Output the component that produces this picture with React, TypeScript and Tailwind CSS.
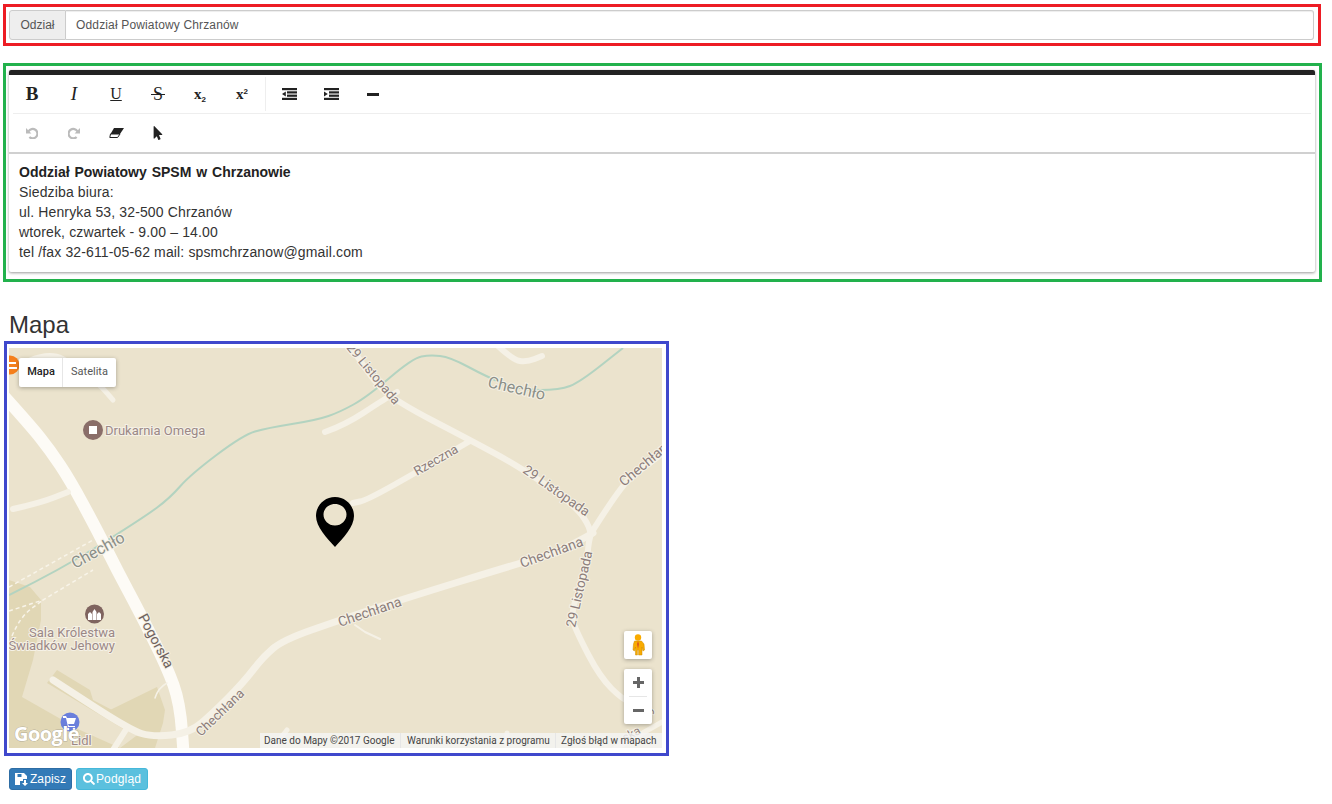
import { FaMousePointer, FaSearch } from "react-icons/fa";

type Pt = [number, number];

// rounds a list of points into a road-like path
const smooth = (pts: Pt[]) => {
  let d = `M${pts[0][0]} ${pts[0][1]}`;
  for (let i = 1; i < pts.length - 1; i++) {
    const mx = (pts[i][0] + pts[i + 1][0]) / 2;
    const my = (pts[i][1] + pts[i + 1][1]) / 2;
    d += ` Q${pts[i][0]} ${pts[i][1]} ${mx} ${my}`;
  }
  const last = pts[pts.length - 1];
  return `${d} L${last[0]} ${last[1]}`;
};

const roads: { pts: Pt[]; w: number; main?: boolean }[] = [
  { pts: [[2, 394], [30, 425], [50, 450], [70, 480], [97, 530], [117, 570], [140, 613], [167, 667], [180, 703], [184, 760]], w: 12, main: true },
  { pts: [[30, 360], [50, 352], [75, 365], [100, 385], [113, 400]], w: 5 },
  { pts: [[13, 509], [40, 503], [68, 492]], w: 6 },
  { pts: [[325, 432], [345, 425], [383, 400], [397, 392]], w: 6 },
  { pts: [[350, 345], [372, 380], [397, 402], [470, 440], [520, 467], [575, 505], [592, 530], [588, 545], [587, 570], [570, 613], [577, 633], [600, 677], [623, 700], [640, 706]], w: 6 },
  { pts: [[590, 535], [620, 487], [640, 470], [670, 448]], w: 6 },
  { pts: [[593, 533], [560, 552], [520, 563], [400, 600], [340, 620], [283, 640], [263, 657], [243, 683], [213, 713], [190, 733], [153, 737], [130, 730], [53, 680]], w: 7 },
  { pts: [[470, 441], [417, 472], [367, 500], [353, 503]], w: 6 },
  { pts: [[127, 728], [113, 750]], w: 6 },
  { pts: [[497, 345], [513, 360], [527, 362], [542, 356]], w: 6 },
  { pts: [[662, 722], [613, 750]], w: 5 },
  { pts: [[287, 730], [275, 745]], w: 5 },
  { pts: [[507, 733], [507, 748]], w: 5 },
];

const labels: { text: string; x: number; y: number; r: number; size: number; cls: string }[] = [
  { text: "Chechło", x: 75, y: 569, r: -29, size: 16, cls: "fill-[#8b8f88]" },
  { text: "Chechło", x: 487, y: 387, r: 13, size: 16, cls: "fill-[#8b8f88]" },
  { text: "Rzeczna", x: 417, y: 476, r: -30, size: 13, cls: "fill-[#8c7d7a]" },
  { text: "29 Listopada", x: 522, y: 472, r: 35, size: 13.5, cls: "fill-[#8c7d7a]" },
  { text: "29 Listopada", x: 346, y: 348, r: 50, size: 13, cls: "fill-[#8c7d7a]" },
  { text: "Chechłana", x: 522, y: 568, r: -20, size: 14, cls: "fill-[#8c7d7a]" },
  { text: "Chechłana", x: 340, y: 627, r: -19, size: 14, cls: "fill-[#8c7d7a]" },
  { text: "Chechłana", x: 201, y: 737, r: -44, size: 13, cls: "fill-[#8c7d7a]" },
  { text: "Chechłana", x: 624, y: 487, r: -40, size: 14, cls: "fill-[#8c7d7a]" },
  { text: "29 Listopada", x: 575, y: 628, r: -77, size: 13.5, cls: "fill-[#8c7d7a]" },
  { text: "Pogorska", x: 138, y: 617, r: 62, size: 14, cls: "fill-[#6e625e]" },
  { text: "ska", x: 625, y: 742, r: -28, size: 12, cls: "fill-[#8c7d7a]" },
  { text: "9", x: 653, y: 716, r: -70, size: 12, cls: "fill-[#8c7d7a]" },
];

const MapDrawing = () => (
  <svg viewBox="9 348 653 400" className="absolute inset-0 block h-full w-full font-['Roboto',sans-serif]">
    <rect x="9" y="348" width="653" height="400" fill="#ebe3cd" />
    <path d="M9 580 L30 587 L41 600 L41 620 L33 660 L22 697 L80 730 L120 748 L9 748Z" fill="#e1d7b5" />
    <path d="M57 670 L47 683 L125 730 L135 722 L93 700 L90 690Z" fill="#e1d7b5" />
    <path d="M110 710 L157 687 L165 710 L163 723 L155 748 L120 748 L140 733Z" fill="#e1d7b5" />
    <path d={smooth([[9, 595], [60, 570], [143, 518], [170, 498], [190, 475], [243, 435], [267, 428], [317, 420], [340, 412], [367, 397], [413, 358], [430, 355], [450, 357], [487, 377], [520, 390], [560, 390], [580, 382], [623, 348]])} fill="none" stroke="#b3d3c0" strokeWidth="2" />
    <g fill="none" stroke="#f8f4e9" strokeWidth="1.5" strokeDasharray="4 3">
      <path d="M9 587 L93 540" />
      <path d="M9 611 L43 600 L93 570" />
      <path d={smooth([[12, 636], [20, 617], [43, 600]])} />
    </g>
    <g fill="none" strokeLinecap="round" strokeLinejoin="round">
      {roads.map((road, i) => (
        <path key={i} d={smooth(road.pts)} stroke={road.main ? "#fdfbf6" : "#f5f1e6"} strokeWidth={road.w} />
      ))}
      <path d="M355 625 L365 632 L380 639" stroke="#f5f1e6" strokeWidth="2" />
      <path d="M155 698 Q158 688 167 683" stroke="#f5f1e6" strokeWidth="1.5" />
    </g>
    {labels.map((l, i) => (
      <text
        key={i}
        transform={`translate(${l.x} ${l.y}) rotate(${l.r})`}
        fontSize={l.size}
        stroke="#f5f1e6"
        strokeWidth="2"
        className={`${l.cls} [paint-order:stroke]`}
      >
        {l.text}
      </text>
    ))}

    <circle cx="10" cy="365" r="9.5" fill="#f57f1c" />
    <path d="M9 362h7v2H9zM9 367h8v2H9z" fill="#fff" />

    <circle cx="93" cy="430" r="10" fill="#8a6e69" />
    <rect x="89" y="426" width="8" height="8" fill="#fff" />
    <text x="105" y="435" fontSize="13" stroke="#f5f1e6" strokeWidth="2" className="fill-[#9b8886] [paint-order:stroke]">
      Drukarnia Omega
    </text>

    <circle cx="94.5" cy="614" r="9.5" fill="#7f645f" />
    <path d="M88 620v-6l2-2 2 2v6zM92.5 620v-8l2-3 2 3v8zM97 620v-6l2-2 2 2v6z" fill="#fff" />
    <g stroke="#f5f1e6" strokeWidth="2" fontSize="13" textAnchor="end" className="fill-[#9b8886] [paint-order:stroke]">
      <text x="115" y="637">Sala Królestwa</text>
      <text x="115" y="650">Świadków Jehowy</text>
    </g>

    <circle cx="70" cy="722" r="9.5" fill="#6a7fdc" />
    <path d="M63 716h3l1 2h9l-2 6h-6l1 2h6v1h-7l-2-9h-3z" fill="#fff" />
    <circle cx="68" cy="729" r="1.3" fill="#fff" />
    <circle cx="74" cy="729" r="1.3" fill="#fff" />
    <text x="71" y="745" fontSize="13" stroke="#f5f1e6" strokeWidth="2" className="fill-[#9b8886] [paint-order:stroke]">
      Lidl
    </text>

    <text x="14" y="741" fontSize="20" stroke="#6b6b6b" strokeOpacity="0.4" strokeWidth="1" className="fill-white font-['Open_Sans',sans-serif] font-bold tracking-[-0.6px] [paint-order:stroke]">
      Google
    </text>

    <path
      fillRule="evenodd"
      d="M335 497 C345.5 497 354 505.5 354 516 C354 527 343 538 335 547 C327 538 316 527 316 516 C316 505.5 324.5 497 335 497Z M335 504 C328.4 504 323.5 509 323.5 514.5 C323.5 520.5 328.4 525.5 335 525.5 C341.6 525.5 346.5 520.5 346.5 514.5 C346.5 509 341.6 504 335 504Z"
      fill="#000"
    />
  </svg>
);

const ToolButton = ({ children }: { children: React.ReactNode }) => (
  <div className="flex h-[38px] w-[42px] items-center justify-center text-[#222]">{children}</div>
);

const IndentIcon = ({ out }: { out?: boolean }) => (
  <svg width="15" height="12" viewBox="0 0 15 12" fill="#222">
    <rect width="15" height="2.2" />
    <rect x="5" y="3.3" width="10" height="2.2" />
    <rect x="5" y="6.6" width="10" height="2.2" />
    <rect y="9.8" width="15" height="2.2" />
    <path d={out ? "M3.8 3.6V8.4L0 6z" : "M0 3.6V8.4L3.8 6z"} />
  </svg>
);

const UndoIcon = ({ className }: { className?: string }) => (
  <svg width="12" height="12" viewBox="0 0 12 12" className={className}>
    <path d="M2.6 4.4A4.7 4.7 0 1 1 3.4 10" fill="none" stroke="#bbb" strokeWidth="2.2" />
    <path d="M0 1V6.4H5.4z" fill="#bbb" />
  </svg>
);

const App = () => {
  return (
    <div className="font-['Liberation_Sans',Arial,sans-serif]">
      <div className="ml-[3px] mt-[4px] h-[42px] w-[1318px] border-[3px] border-[#ed1c24] pl-[3px] pt-[3px]">
        <div className="flex h-[30px] w-[1305px] text-xs text-[#555]">
          <div className="flex w-[57px] items-center justify-center rounded-l-[3px] border border-[#ccc] bg-[#eee]">
            Odział
          </div>
          <div className="flex flex-1 items-center rounded-r-[3px] border border-l-0 border-[#ccc] bg-white pl-[10px] tracking-[0.15px] shadow-[inset_0_1px_1px_rgba(0,0,0,0.075)]">
            Oddział Powiatowy Chrzanów
          </div>
        </div>
      </div>

      <div className="ml-[3px] mt-[17px] h-[219px] w-[1319px] border-[3px] border-[#22b14c] pl-[3px] pt-[4px]">
        <div className="h-[202px] w-[1306px] rounded-[2px] bg-white shadow-[0_1px_3px_rgba(0,0,0,0.4)]">
          <div className="h-[5px] rounded-t-[2px] bg-[#222]" />
          <div className="mx-[4px] border-b border-[#eee]">
            <div className="-ml-[2px] flex h-[38px] items-center">
              <ToolButton>
                <span className="font-['Liberation_Serif',serif] text-[19px] font-bold">B</span>
              </ToolButton>
              <ToolButton>
                <span className="font-['Liberation_Serif',serif] text-[19px] italic">I</span>
              </ToolButton>
              <ToolButton>
                <span className="font-['Liberation_Serif',serif] text-[16px] underline">U</span>
              </ToolButton>
              <ToolButton>
                <span className="relative font-['Liberation_Serif',serif] text-[18px]">
                  S<span className="absolute -left-[2px] top-[13px] h-px w-[14px] bg-[#222]" />
                </span>
              </ToolButton>
              <ToolButton>
                <span className="font-['Liberation_Serif',serif] text-[15px] font-bold">
                  x<span className="relative top-[3px] font-['Liberation_Sans',sans-serif] text-[8px]">2</span>
                </span>
              </ToolButton>
              <ToolButton>
                <span className="font-['Liberation_Serif',serif] text-[15px] font-bold">
                  x<span className="relative -top-[5px] font-['Liberation_Sans',sans-serif] text-[8px]">2</span>
                </span>
              </ToolButton>
              <div className="ml-[2px] mr-[2px] h-[34px] w-px bg-[#eee]" />
              <ToolButton>
                <IndentIcon out />
              </ToolButton>
              <ToolButton>
                <IndentIcon />
              </ToolButton>
              <ToolButton>
                <div className="h-[3px] w-[12px] bg-[#222]" />
              </ToolButton>
            </div>
          </div>
          <div className="mx-[4px] -ml-0 flex h-[38px] items-center pl-[2px]">
            <ToolButton>
              <UndoIcon />
            </ToolButton>
            <ToolButton>
              <UndoIcon className="-scale-x-100" />
            </ToolButton>
            <ToolButton>
              <svg width="15" height="10" viewBox="0 0 15 10">
                <path d="M5 0H15L11 6H1.5z" fill="#222" />
                <path d="M1.5 6H11L8.6 9.5H.8z" fill="#fff" stroke="#222" strokeWidth="1" />
              </svg>
            </ToolButton>
            <ToolButton>
              <FaMousePointer size={14} />
            </ToolButton>
          </div>
          <div className="border-t-2 border-[#d0d0d0] px-[10px] pt-[8px] text-sm leading-5 tracking-[0.14px] text-[#333]">
            <p className="font-bold tracking-normal text-[#222] [word-spacing:1px]">Oddział Powiatowy SPSM w Chrzanowie</p>
            <p>Siedziba biura:</p>
            <p>ul. Henryka 53, 32-500 Chrzanów</p>
            <p>wtorek, czwartek - 9.00 – 14.00</p>
            <p>tel /fax 32-611-05-62 mail: spsmchrzanow@gmail.com</p>
          </div>
        </div>
      </div>

      <h3 className="ml-[9px] mt-[28px] h-[31px] text-2xl leading-[29px] text-[#333]">Mapa</h3>

      <div className="ml-[4px] h-[415px] w-[665px] border-[3px] border-[#3f48cc] pb-[5px] pl-[2px] pr-[4px] pt-[4px]">
        <div className="relative h-[400px] w-[653px] overflow-hidden font-['Roboto',sans-serif]">
          <MapDrawing />

          <div className="absolute left-[10px] top-[10px] flex h-[29px] rounded-[2px] bg-white text-[11px] shadow-[0_1px_4px_rgba(0,0,0,0.3)]">
            <div className="flex w-[44px] items-center justify-center border-r border-[#e6e6e6] pl-[1px] font-medium text-[#222]">
              Mapa
            </div>
            <div className="flex w-[53px] items-center justify-center text-[#565656]">Satelita</div>
          </div>

          <div className="absolute left-[615px] top-[283px] flex h-[28px] w-[28px] items-center justify-center rounded-[2px] bg-white shadow-[0_1px_4px_rgba(0,0,0,0.3)]">
            <svg width="14" height="22" viewBox="0 0 14 22">
              <circle cx="7" cy="3.5" r="3.2" fill="#f9ab00" />
              <path d="M3.5 7h7l2.5 3 .5 6-1.5 1-1-4v8H7.6v-5h-1.2v5H4.5v-8l-1 4L2 16l.5-6z" fill="#f9ab00" stroke="#c98a00" strokeWidth="0.5" />
              <path d="M7 7l1 3-1 5-1-5z" fill="#d9541e" />
            </svg>
          </div>

          <div className="absolute left-[615px] top-[321px] flex h-[55px] w-[28px] flex-col items-center rounded-[2px] bg-white shadow-[0_1px_4px_rgba(0,0,0,0.3)]">
            <div className="flex h-[27px] w-full items-center justify-center">
              <svg width="11" height="11" viewBox="0 0 11 11">
                <path d="M4 0h3v4h4v3H7v4H4V7H0V4h4z" fill="#666" />
              </svg>
            </div>
            <div className="h-px w-[18px] bg-[#e6e6e6]" />
            <div className="flex h-[27px] w-full items-center justify-center">
              <div className="h-[3px] w-[11px] bg-[#666]" />
            </div>
          </div>

          <div className="absolute bottom-0 left-[251px] flex h-[15px] w-[402px] items-center bg-[#f5f5f5]/80 text-[10px] text-[#444]">
            <span className="w-[140px] pl-[4px]">Dane do Mapy ©2017 Google</span>
            <span className="h-full w-px bg-[#e6e6e6]" />
            <span className="w-[154px] pl-[6px]">Warunki korzystania z programu</span>
            <span className="h-full w-px bg-[#e6e6e6]" />
            <span className="pl-[5px]">Zgłoś błąd w mapach</span>
          </div>
        </div>
      </div>

      <div className="ml-[9px] mt-[12px] flex gap-[4px] text-xs tracking-[0.15px] text-white">
        <button className="flex h-[22px] w-[63px] items-center justify-center gap-[2px] rounded-[3px] border border-[#2e6da4] bg-[#337ab7]">
          <svg width="13" height="13" viewBox="0 0 13 13">
            <path d="M0 0h9l3 3v3H8V8H5v4H0z M2.5 1v3h4V1z" fill="#fff" fillRule="evenodd" />
            <path d="M9 7h2v3h2l-3 3-3-3h2z" fill="#fff" />
          </svg>
          Zapisz
        </button>
        <button className="flex h-[22px] w-[72px] items-center justify-center gap-[1px] rounded-[3px] border border-[#46b8da] bg-[#5bc0de]">
          <FaSearch size={12} />
          Podgląd
        </button>
      </div>
    </div>
  );
};

export default App;
